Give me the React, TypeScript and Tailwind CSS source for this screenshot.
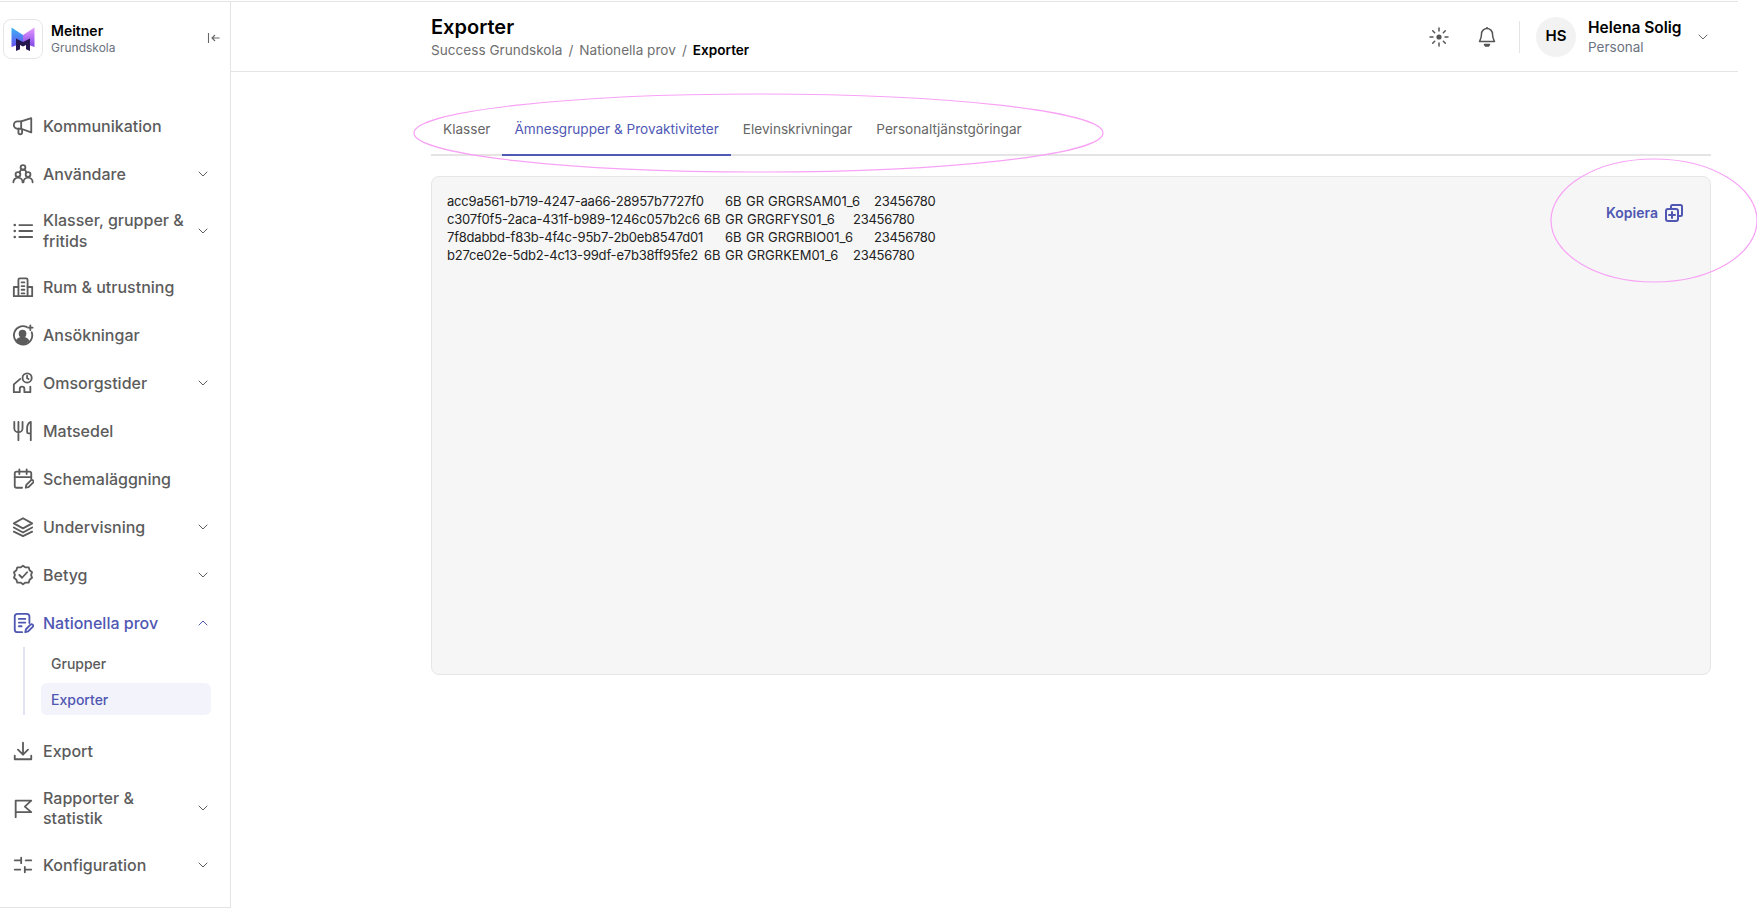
import { ChevronDown, ChevronUp } from "lucide-react";
import type { ReactNode } from "react";

const font = { fontFamily: '"Inter", "Noto Sans", sans-serif' };

function Icon({ children, size = 22, sw = 2 }: { children: ReactNode; size?: number; sw?: number }) {
  return (
    <svg
      width={size}
      height={size}
      viewBox="0 0 24 24"
      fill="none"
      stroke="currentColor"
      strokeWidth={sw}
      strokeLinecap="round"
      strokeLinejoin="round"
      className="shrink-0"
    >
      {children}
    </svg>
  );
}

const icons: Record<string, ReactNode> = {
  megaphone: (
    <>
      <path d="M21 3.500v15.500L10 15H6a4 4 0 0 1 0-8h4z" />
      <path d="M10 7v8M7 15v4a2 2 0 0 0 4 0v-3" />
    </>
  ),
  users: (
    <>
      <circle cx="12" cy="5" r="2.600" />
      <circle cx="6.500" cy="12.500" r="2.600" />
      <circle cx="17.500" cy="12.500" r="2.600" />
      <path d="M8.500 10.500a3.500 3.500 0 0 1 7 0" />
      <path d="M1.500 21a5 5 0 0 1 10 0M12.500 21a5 5 0 0 1 10 0" />
    </>
  ),
  list: (
    <>
      <path d="M8 5.500h14M8 12h14M8 18.500h14" />
      <path d="M3 5.500h.01M3 12h.01M3 18.500h.01" strokeWidth={2.800} />
    </>
  ),
  building: (
    <>
      <path d="M2 22V12h5M22 22V12h-5M2 22h20" />
      <path d="M7 22V4a1.500 1.500 0 0 1 1.500-1.500h7A1.500 1.500 0 0 1 17 4v18" />
      <path d="M10.500 7h3M10.500 11h3M10.500 15h3M10.500 19h3" />
    </>
  ),
  application: (
    <>
      <path d="M16 3.200A10 10 0 1 0 21.500 9" />
      <circle cx="11.500" cy="10.500" r="3.200" fill="currentColor" />
      <path d="M5 18.500c1.500-2.500 3.800-3.500 6.500-3.500s5 1 6.500 3.500c-1.800 1.800-4 2.800-6.500 2.800S6.800 20.300 5 18.500z" fill="currentColor" />
      <path d="M20 1.500v5M17.500 4h5" />
    </>
  ),
  careClock: (
    <>
      <path d="M9 7.500 2 13.500V22h6.500v-3.500a2.500 2.500 0 0 1 5 0V22H20v-6" />
      <circle cx="16.500" cy="6.500" r="5" />
      <path d="M16.500 4v2.700l1.600 1" />
    </>
  ),
  utensils: (
    <>
      <path d="M2.500 2v7a4.500 4.500 0 0 0 9 0V2M7 2v20" />
      <path d="M20.500 22V2c-2.500 1-4 3.500-4 7v4a1.500 1.500 0 0 0 1.500 1.500h2.500" />
    </>
  ),
  calendarPen: (
    <>
      <path d="M11 21.500H5a2 2 0 0 1-2-2V6a2 2 0 0 1 2-2h14a2 2 0 0 1 2 2v6" />
      <path d="M8 1.500v5M16 1.500v5M3 10h18" />
      <path d="m15 21.500.6-3 5-5a1.700 1.700 0 0 1 2.400 2.400l-5 5z" />
    </>
  ),
  layers: (
    <>
      <path d="m12 2.500 10 5.500-10 5.500L2 8z" />
      <path d="m2 12.500 10 5.500 10-5.500" />
      <path d="m2 17 10 5 10-5" />
    </>
  ),
  badge: (
    <>
      <path d="M12 1.800l2.800 1.900 3.400-.1 1 3.200 2.700 2.100L20.800 12l1.100 3.100-2.700 2.100-1 3.200-3.400-.1L12 22.200l-2.800-1.900-3.400.1-1-3.200-2.700-2.100L3.200 12 2.100 8.900l2.700-2.100 1-3.200 3.400.1z" />
      <path d="m8 12 3 3 5.500-6" />
    </>
  ),
  filePen: (
    <>
      <path d="M11 22H6a3 3 0 0 1-3-3V5a3 3 0 0 1 3-3h10a3 3 0 0 1 3 3v7" />
      <path d="M7.500 7.500h7M7.500 11.500h7M7.500 15.500h3" />
      <path d="m14.500 22 .7-3.200 5-5a1.700 1.700 0 0 1 2.400 2.400l-5 5z" />
    </>
  ),
  download: (
    <>
      <path d="M12 3v13M6.500 10.500 12 16l5.500-5.500" />
      <path d="M3 17v4h18v-4" />
    </>
  ),
  flag: <path d="M4 22V4h17l-7 6.500 7 6H4" />,
  sliders: <path d="M3 7h7M15 7h6M10 4v6M3 17h6M14 17h7M14 14v6" />,
};

type NavItem = { label: ReactNode; icon: string; chevron?: boolean; active?: boolean };

const topItems: NavItem[] = [
  { label: "Kommunikation", icon: "megaphone" },
  { label: "Användare", icon: "users", chevron: true },
  { label: <>Klasser, grupper &amp;<br />fritids</>, icon: "list", chevron: true },
  { label: "Rum & utrustning", icon: "building" },
  { label: "Ansökningar", icon: "application" },
  { label: "Omsorgstider", icon: "careClock", chevron: true },
  { label: "Matsedel", icon: "utensils" },
  { label: "Schemaläggning", icon: "calendarPen" },
  { label: "Undervisning", icon: "layers", chevron: true },
  { label: "Betyg", icon: "badge", chevron: true },
];

const bottomItems: NavItem[] = [
  { label: "Export", icon: "download" },
  { label: <>Rapporter &amp;<br />statistik</>, icon: "flag", chevron: true },
  { label: "Konfiguration", icon: "sliders", chevron: true },
];

const exportRows = [
  { uuid: "acc9a561-b719-4247-aa66-28957b7727f0", uuidWidth: "w-[278px]", code: "GRGRSAM01_6" },
  { uuid: "c307f0f5-2aca-431f-b989-1246c057b2c6", uuidWidth: "w-[257px]", code: "GRGRFYS01_6" },
  { uuid: "7f8dabbd-f83b-4f4c-95b7-2b0eb8547d01", uuidWidth: "w-[278px]", code: "GRGRBIO01_6" },
  { uuid: "b27ce02e-5db2-4c13-99df-e7b38ff95fe2", uuidWidth: "w-[257px]", code: "GRGRKEM01_6" },
];

const tabs = ["Klasser", "Ämnesgrupper & Provaktiviteter", "Elevinskrivningar", "Personaltjänstgöringar"];

function NavRow({ item }: { item: NavItem }) {
  return (
    <div
      className={`flex min-h-12 items-center gap-[9px] pl-[12px] pr-[19px] py-3 text-[16px] font-medium leading-[20.5px] ${
        item.active ? "text-[#4f57b3]" : "text-[#5c5c5c]"
      }`}
    >
      <Icon>{icons[item.icon]}</Icon>
      <span className="flex-1 whitespace-nowrap">{item.label}</span>
      {item.chevron ? (
        item.active ? (
          <ChevronUp size={16} strokeWidth={1.5} />
        ) : (
          <ChevronDown size={16} strokeWidth={1.5} />
        )
      ) : null}
    </div>
  );
}

function Logo() {
  return (
    <svg width="24" height="24" viewBox="0 0 24 24">
      <defs>
        <linearGradient id="logoLeft" x1="0" y1="0" x2="0" y2="1">
          <stop offset="0" stopColor="#38b6f4" />
          <stop offset="1" stopColor="#6a4df0" />
        </linearGradient>
        <linearGradient id="logoRight" x1="0" y1="0" x2="0" y2="1">
          <stop offset="0" stopColor="#e79bff" />
          <stop offset="1" stopColor="#7e46e6" />
        </linearGradient>
      </defs>
      <path d="M0.500 0.500 12 8v8L0.500 20z" fill="url(#logoLeft)" />
      <path d="M23.500 0.500 12 8v8l11.500 4z" fill="url(#logoRight)" />
      <path d="M5 11.500 12 15l7-3.500V24l-4-1.800V18l-3 1.500L9 18v4.200L5 24z" fill="#24174f" />
    </svg>
  );
}

function Sidebar() {
  return (
    <aside className="flex h-full w-[231px] shrink-0 flex-col border-r border-b border-[#e4e4e4]">
      <div className="flex h-[100px] items-start pl-[3px] pr-[9px] pt-[17px]">
        <div className="flex size-10 items-center justify-center rounded-lg border border-[#e6e6e6]">
          <Logo />
        </div>
        <div className="ml-2 flex-1">
          <p className="mt-[3px] text-[14px] font-semibold leading-[18px] text-black">Meitner</p>
          <p className="text-[12px] leading-[16px] text-[#6b7280]">Grundskola</p>
        </div>
        <svg width="14" height="14" viewBox="0 0 14 14" fill="none" stroke="#666" strokeWidth="1.100" className="mt-[12px]">
          <path d="M1.500 2v10M12.500 7H5M8 4 5 7l3 3" />
        </svg>
      </div>

      <nav className="flex flex-col">
        {topItems.map((item, index) => (
          <NavRow key={index} item={item} />
        ))}
        <NavRow item={{ label: "Nationella prov", icon: "filePen", chevron: true, active: true }} />
        <div className="ml-[23px] mr-[19px] flex flex-col gap-[4px] border-l-2 border-[#e1e3f0] pl-4 text-[14px] font-medium">
          <div className="flex h-8 items-center pl-[10px] text-[#5c5c5c]">Grupper</div>
          <div className="flex h-8 items-center rounded-md bg-[#f3f4fb] pl-[10px] text-[#4f57b3]">Exporter</div>
        </div>
        <div className="mt-[12px] flex flex-col gap-[0.6px]">
          {bottomItems.map((item, index) => (
            <NavRow key={index} item={item} />
          ))}
        </div>
      </nav>
    </aside>
  );
}

function Header() {
  return (
    <header className="flex h-[70px] items-center border-b border-[#e4e4e4] pl-[200px] pr-[27px]">
      <div className="flex-1">
        <h1 className="text-[20px] font-semibold leading-[26px] text-black">Exporter</h1>
        <p className="mt-[1px] flex text-[13.6px] leading-[18px] text-[#6f6f6f]">
          Success Grundskola
          <span className="mx-[6px]">/</span>
          Nationella prov
          <span className="mx-[6px]">/</span>
          <span className="font-semibold text-black">Exporter</span>
        </p>
      </div>
      <div className="flex items-center text-[#555]">
        <svg width="20" height="20" viewBox="0 0 20 20" fill="none" stroke="currentColor" strokeWidth="1.500" strokeLinecap="round">
          <circle cx="10" cy="10" r="2.600" fill="currentColor" stroke="none" />
          <path d="M10 1v3M10 16v3M1 10h3M16 10h3M3.700 3.700l2 2M14.300 14.300l2 2M16.300 3.700l-2 2M5.700 14.300l-2 2" />
        </svg>
        <svg width="20" height="22" viewBox="0 0 20 22" fill="none" stroke="currentColor" strokeWidth="1.500" strokeLinejoin="round" className="ml-[28px]">
          <path d="M10 2.500a5.500 5.500 0 0 0-5.500 5.500c0 4.500-1.500 6-2 7.500h15c-.5-1.500-2-3-2-7.500A5.500 5.500 0 0 0 10 2.500z" />
          <path d="M7.500 18.500h5l-1 1.500h-3z" fill="currentColor" />
          <path d="M10 1v1.500" />
        </svg>
        <div className="ml-[22px] h-8 w-px bg-[#e4e4e4]" />
        <div className="ml-[16px] flex size-10 items-center justify-center rounded-full bg-[#f2f2f2] text-[15px] font-semibold text-black">
          HS
        </div>
        <div className="ml-3 w-[108px]">
          <p className="text-[15.5px] font-semibold leading-[20px] text-black">Helena Solig</p>
          <p className="text-[13.5px] leading-[18px] text-[#6b7280]">Personal</p>
        </div>
        <ChevronDown size={16} strokeWidth={1.3} className="ml-[-1px] mr-0" />
      </div>
    </header>
  );
}

function Content() {
  return (
    <div className="pl-[200px] pr-[27px]">
      <div className="mt-[30px] flex h-[54px] border-b-2 border-[#e4e4e4] text-[13.6px] text-[#666]">
        {tabs.map((tab, index) => (
          <div
            key={tab}
            className={`-mb-[2px] flex items-center border-b-2 px-3 pt-[2px] ${
              index === 1 ? "border-[#5059b5] text-[#5059b5]" : "border-transparent"
            }`}
          >
            {tab}
          </div>
        ))}
      </div>

      <div className="mt-5 flex h-[499px] items-start justify-between rounded-lg border border-[#e6e6e6] bg-[#f6f6f6] pl-[15px] pr-[27px] pt-[15px]">
        <div className="text-[13px] leading-[18px] text-[#222]">
          {exportRows.map((row) => (
            <div key={row.uuid} className="flex whitespace-nowrap">
              <span className={`${row.uuidWidth} tracking-[-0.2px]`}>{row.uuid}</span>
              <span className="w-[21px]">6B</span>
              <span className="w-[22px]">GR</span>
              <span className="w-[106px]">{row.code}</span>
              <span className="tracking-[-0.28px]">23456780</span>
            </div>
          ))}
        </div>
        <button type="button" className="mt-[10px] flex items-center gap-[7px] text-[14px] font-semibold text-[#4f57b3]">
          Kopiera
          <svg width="18" height="18" viewBox="0 0 18 18" fill="none" stroke="currentColor" strokeWidth="2" strokeLinejoin="round">
            <path d="M6 5V2.500A1.500 1.500 0 0 1 7.500 1h8A1.500 1.500 0 0 1 17 2.500v8a1.500 1.500 0 0 1-1.500 1.500H13" />
            <rect x="1" y="5" width="12" height="12" rx="2" />
            <path d="M7 8v6M4 11h6" strokeLinecap="round" />
          </svg>
        </button>
      </div>
    </div>
  );
}

export default function App() {
  return (
    <div className="relative h-[909px] w-full overflow-hidden bg-white" style={font}>
      <div className="mt-px flex h-[907px] w-[1738px] border-t border-[#e4e4e4]">
        <Sidebar />
        <main className="min-w-0 flex-1">
          <Header />
          <Content />
        </main>
      </div>

      {/* hand drawn review marks */}
      <svg className="pointer-events-none absolute inset-0" width="1757" height="909" fill="none" stroke="#f8a2f6" strokeWidth="1.200">
        <ellipse cx="758.500" cy="133" rx="344.500" ry="39" />
        <ellipse cx="1654" cy="220.500" rx="103" ry="61.500" />
      </svg>
    </div>
  );
}
